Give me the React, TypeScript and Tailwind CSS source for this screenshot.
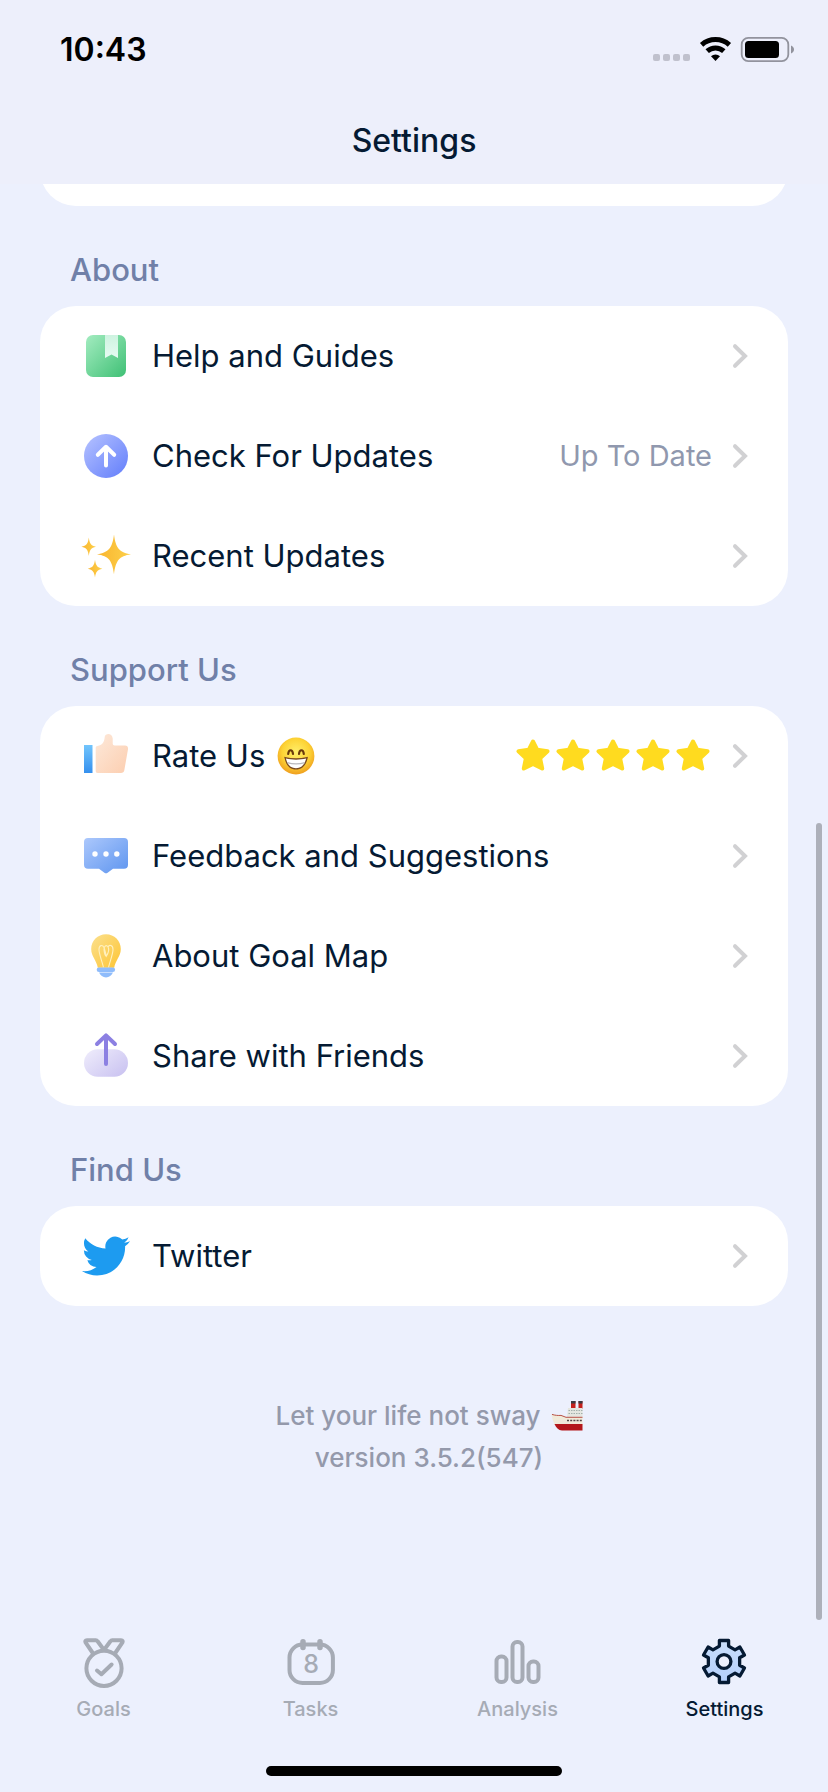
import type { ReactNode } from "react";

function BookIcon() {
  return (
    <svg viewBox="0 0 48 48" className="size-12" aria-hidden="true">
      <defs>
        <linearGradient id="book" x1="0" y1="0" x2="1" y2="1">
          <stop offset="0" stopColor="#a3ecc0" />
          <stop offset="1" stopColor="#3fc075" />
        </linearGradient>
        <linearGradient id="ribbon" x1="0" y1="0" x2="0" y2="1">
          <stop offset="0" stopColor="#cdf3e0" />
          <stop offset="1" stopColor="#e6fbf2" />
        </linearGradient>
      </defs>
      <rect x="4" y="3" width="40" height="42" rx="7" fill="url(#book)" />
      <path d="M23 3H36V26L29.5 22.5L23 26Z" fill="url(#ribbon)" />
    </svg>
  );
}

function UpdateIcon() {
  return (
    <svg viewBox="0 0 48 48" className="size-12" aria-hidden="true">
      <defs>
        <linearGradient id="update" x1="0.1" y1="0.1" x2="0.9" y2="0.9">
          <stop offset="0" stopColor="#aebcff" />
          <stop offset="1" stopColor="#6a84fb" />
        </linearGradient>
      </defs>
      <circle cx="24" cy="24" r="22" fill="url(#update)" />
      <path d="M24 33.5V15M15.8 22.8L24 14.8L32.2 22.8" fill="none" stroke="#fff" strokeWidth="4" strokeLinecap="round" strokeLinejoin="round" />
    </svg>
  );
}

function SparklesIcon() {
  return (
    <svg viewBox="0 0 48 48" className="size-12 overflow-visible" aria-hidden="true">
      <defs>
        <linearGradient id="spark" x1="0" y1="0" x2="1" y2="0">
          <stop offset="0" stopColor="#f9b52f" />
          <stop offset="1" stopColor="#fdd04a" />
        </linearGradient>
      </defs>
      <g fill="url(#spark)">
        <path d="M32 2.5C33.8 16 37 20.4 49 22.3C37 24.2 33.8 28.6 32 42.3C30.2 28.6 27 24.2 15 22.3C27 20.4 30.2 16 32 2.5Z" />
        <path d="M6.8 5.5C7.5 11.5 9 13.6 14 14.7C9 15.8 7.5 18 6.8 24C6.1 18 4.6 15.8 -0.6 14.7C4.6 13.6 6.1 11.5 6.8 5.5Z" />
        <path d="M13 27.8C13.8 33.6 15.2 35.6 20.4 36.7C15.2 37.8 13.8 39.8 13 45.4C12.2 39.8 10.8 37.8 5.8 36.7C10.8 35.6 12.2 33.6 13 27.8Z" />
      </g>
    </svg>
  );
}

function ThumbIcon() {
  return (
    <svg viewBox="0 0 48 48" className="size-12" aria-hidden="true">
      <defs>
        <linearGradient id="cuff" x1="0" y1="0" x2="0" y2="1">
          <stop offset="0" stopColor="#72c5fc" />
          <stop offset="1" stopColor="#3590ee" />
        </linearGradient>
        <linearGradient id="hand" x1="0" y1="0" x2="1" y2="1">
          <stop offset="0" stopColor="#fde9da" />
          <stop offset="1" stopColor="#fcceb0" />
        </linearGradient>
      </defs>
      <rect x="2" y="13" width="8.5" height="28" fill="url(#cuff)" />
      <path d="M15.500 41Q13.700 41 13.700 39.200V15.600Q13.700 14 15.500 13.900C20 13.600 22.300 10.500 22.800 4.600C23.300 1 30.200 0.600 30.700 6.500V11.600C30.700 12.900 31.500 13.600 32.700 13.600H43C45.200 13.600 46.400 15.300 46 17.300L42.300 38.200C42 40 40.800 41 39 41Z" fill="url(#hand)" />
    </svg>
  );
}

function FeedbackIcon() {
  return (
    <svg viewBox="0 0 48 48" className="size-12" aria-hidden="true">
      <defs>
        <linearGradient id="bubble" x1="0" y1="0" x2="1" y2="1">
          <stop offset="0" stopColor="#acc8fc" />
          <stop offset="1" stopColor="#5e95ef" />
        </linearGradient>
      </defs>
      <path d="M6 6H42A4 4 0 0 1 46 10V32.7A4 4 0 0 1 42 36.7H31L25.6 40.7Q24 41.8 22.4 40.7L17 36.7H6A4 4 0 0 1 2 32.7V10A4 4 0 0 1 6 6Z" fill="url(#bubble)" />
      <g fill="#fff">
        <circle cx="13" cy="22" r="2.7" />
        <circle cx="24" cy="22" r="2.7" />
        <circle cx="34.8" cy="22" r="2.7" />
      </g>
    </svg>
  );
}

function BulbIcon() {
  return (
    <svg viewBox="0 0 48 48" className="size-12" aria-hidden="true">
      <defs>
        <linearGradient id="bulb" x1="0" y1="0" x2="1" y2="1">
          <stop offset="0" stopColor="#fbe08e" />
          <stop offset="1" stopColor="#fdc534" />
        </linearGradient>
      </defs>
      <path d="M24 2.3C15.6 2.3 9.2 8.8 9.2 17C9.2 24.5 14.6 28 15.8 35.8H32.2C33.4 28 38.8 24.5 38.8 17C38.8 8.8 32.4 2.3 24 2.3Z" fill="url(#bulb)" />
      <path d="M21.5 35.5C20 29 17 22 17 17.5C17 13 20.5 12.4 22 15.5C23 18 24 23 24.3 24.2C25.8 22 27.5 17.8 26 14.8C24.6 12.3 21.5 14 22 18C22.3 20.5 23 24.2 24.2 24.2M26.5 35.5C28 29 31 22 31 17.5C31 13 27.2 12.4 26 15" fill="none" stroke="#fff0bd" strokeWidth="1.1" />
      <rect x="14.7" y="35.4" width="18.4" height="4.6" rx="2.3" fill="#8fbcfb" />
      <path d="M17 40.6H31C29.6 43.6 27.2 45.4 24 45.4S18.4 43.6 17 40.6Z" fill="#8fbcfb" />
    </svg>
  );
}

function ShareIcon() {
  return (
    <svg viewBox="0 0 48 48" className="size-12" aria-hidden="true">
      <defs>
        <linearGradient id="share" x1="0" y1="0" x2="1" y2="0.8">
          <stop offset="0.1" stopColor="#ece9fb" />
          <stop offset="1" stopColor="#cbc4f1" />
        </linearGradient>
      </defs>
      <rect x="2" y="17.3" width="44" height="27.5" rx="13.7" fill="url(#share)" />
      <path d="M24 32V4M15 12L24 3.4L33 12" fill="none" stroke="#8c80e2" strokeWidth="4" strokeLinecap="round" strokeLinejoin="round" />
    </svg>
  );
}

function TwitterIcon() {
  return (
    <svg viewBox="0 0 24 24" className="size-12" fill="#1d9bf0" aria-hidden="true">
      <path d="M23.953 4.57a10 10 0 01-2.825.775 4.958 4.958 0 002.163-2.723c-.951.555-2.005.959-3.127 1.184a4.92 4.92 0 00-8.384 4.482C7.69 8.095 4.067 6.13 1.64 3.162a4.822 4.822 0 00-.666 2.475c0 1.71.87 3.213 2.188 4.096a4.904 4.904 0 01-2.228-.616v.06a4.923 4.923 0 003.946 4.827 4.996 4.996 0 01-2.212.085 4.936 4.936 0 004.604 3.417 9.867 9.867 0 01-6.102 2.105c-.39 0-.779-.023-1.17-.067a13.995 13.995 0 007.557 2.209c9.053 0 13.998-7.496 13.998-13.985 0-.21 0-.42-.015-.63A9.935 9.935 0 0024 4.59z" />
    </svg>
  );
}

function GrinEmoji() {
  return (
    <svg viewBox="0 0 38 38" className="size-[38px]" role="img" aria-label="Grinning face">
      <defs>
        <radialGradient id="face" cx="0.5" cy="0.4" r="0.62">
          <stop offset="0" stopColor="#ffef6b" />
          <stop offset="0.6" stopColor="#fdd335" />
          <stop offset="1" stopColor="#ee9a1c" />
        </radialGradient>
      </defs>
      <circle cx="19" cy="19" r="18.4" fill="url(#face)" />
      <path d="M11.2 17C11.6 12 15.6 12 16 17M22 17C22.4 12 26.4 12 26.8 17" fill="none" stroke="#6a3a0c" strokeWidth="2.2" strokeLinecap="round" />
      <path d="M7.4 20.6Q6.8 19.6 8 19.9C15 21.6 23 21.6 30 19.9Q31.2 19.6 30.8 20.8C29 28.5 25 32.6 19 32.6S8.900 28.500 7.400 20.600Z" fill="#7a4a20" />
      <path d="M8.900 21.600C15 23 23 23 29.200 21.600C27.500 28 24 31.200 19 31.200S10.400 28 8.900 21.600Z" fill="#fff" />
      <path d="M10.200 25.600C16 27.200 22 27.200 27.900 25.600" fill="none" stroke="#b9b9bd" strokeWidth="1.200" />
    </svg>
  );
}

function ShipEmoji() {
  return (
    <svg viewBox="0 0 32 32" className="size-8" role="img" aria-label="Ship">
      <path d="M20 1H24.500V9H20ZM27.500 1H31.500V9H27.500Z" fill="#c4201c" />
      <path d="M20 1H24.500V3.500H20ZM27.500 1H31.500V3.500H27.500Z" fill="#3b3b42" />
      <path d="M17 8H31.500V17H16Z" fill="#e4e6e0" />
      <path d="M17.500 10.500H31.500M17.500 13.500H31.500" stroke="#a3b0ac" strokeWidth="1" strokeDasharray="1.500 1" />
      <path d="M0.500 14C3 15 7 15.300 10 15L15 17H31.500V25H4C2 21.500 1 18 0.500 14Z" fill="#f0ead9" />
      <path d="M1 14.400C4 15.400 7 15.600 10 15.400L15 17.300H31.500" fill="none" stroke="#b8534a" strokeWidth="1" />
      <path d="M16 20.500H31.500" stroke="#55484a" strokeWidth="1.400" strokeDasharray="2 1.200" />
      <path d="M3.500 24H31.500V30.500H11C7.500 30.500 5 27.500 3.500 24Z" fill="#b3171b" />
    </svg>
  );
}

function Stars() {
  return (
    <span className="flex gap-1.5 pr-0.5" role="img" aria-label="5 stars">
      {[1, 2, 3, 4, 5].map((n) => (
        <svg key={n} viewBox="0 1 34 34" className="size-[34px]" aria-hidden="true">
          <path d="M17 3.500L21.300 11.800L31.500 13.300L24.100 20.200L26.200 30.500L17 25.900L7.800 30.500L9.900 20.200L2.500 13.300L12.700 11.800Z" fill="#ffdb1f" stroke="#ffdb1f" strokeWidth="4" strokeLinejoin="round" />
        </svg>
      ))}
    </span>
  );
}

function Chevron() {
  return (
    <svg viewBox="0 0 16 26" className="h-[26px] w-4" aria-hidden="true">
      <path d="M3 3.200L13 13L3 22.800" fill="none" stroke="#d1d1d3" strokeWidth="4" strokeLinecap="round" strokeLinejoin="miter" />
    </svg>
  );
}

function Row({ icon, label, emoji, value }: { icon: ReactNode; label: string; emoji?: ReactNode; value?: ReactNode }) {
  return (
    <li>
      <button type="button" className="flex h-[100px] w-full items-center pr-10 pl-[42px] text-left">
        {icon}
        <span className="ml-[22px] flex flex-1 items-center gap-3 text-[31px] text-[#051a33]">
          {label}
          {emoji}
        </span>
        {value && <span className="mr-5 text-[29px] text-[#9098ae]">{value}</span>}
        <Chevron />
      </button>
    </li>
  );
}

function Section({ title, children }: { title: string; children: ReactNode }) {
  return (
    <section className="px-10">
      <h2 className="px-[30px] pt-11 pb-4 text-[31px] leading-10 font-medium text-[#7080a8]">{title}</h2>
      <ul className="rounded-[36px] bg-white">{children}</ul>
    </section>
  );
}

function GoalsIcon() {
  return (
    <svg viewBox="0 0 50 50" className="size-[50px] overflow-visible" fill="none" stroke="currentColor" strokeWidth="4" strokeLinecap="round" strokeLinejoin="round" aria-hidden="true">
      <circle cx="25" cy="31.300" r="17.600" />
      <path d="M25 13L18.600 4.300Q17.900 3.300 16.700 3.300H8Q5.400 3.300 6.700 5.700L13.400 15.500" />
      <path d="M25 13L31.400 4.300Q32.100 3.300 33.300 3.300H42Q44.600 3.300 43.300 5.700L36.600 15.500" />
      <path d="M18 33.500L22.400 37.200L32.600 27.500" />
    </svg>
  );
}

function TasksIcon() {
  return (
    <svg viewBox="0 0 50 50" className="size-[50px]" fill="none" stroke="currentColor" strokeWidth="4" strokeLinecap="round" aria-hidden="true">
      <rect x="3.500" y="7.500" width="43.400" height="38.500" rx="13" />
      <path d="M17 4.800V10.500M34 4.800V10.500" strokeWidth="5.500" />
      <text x="25.200" y="36" textAnchor="middle" fill="currentColor" stroke="none" className="text-[25px] font-medium">8</text>
    </svg>
  );
}

function AnalysisIcon() {
  return (
    <svg viewBox="0 0 50 50" className="size-[50px]" fill="none" stroke="currentColor" strokeWidth="4" aria-hidden="true">
      <rect x="3.500" y="19.500" width="10" height="25.500" rx="4.500" />
      <rect x="19.500" y="5" width="10" height="40" rx="4.500" />
      <rect x="35.500" y="24.500" width="10" height="20.500" rx="4.500" />
    </svg>
  );
}

const GEAR_POINTS = [0, 60, 120, 180, 240, 300]
  .flatMap((deg) => {
    const a = (deg * Math.PI) / 180;
    return [[-4.6, -15.4], [-4.6, -21], [4.6, -21], [4.6, -15.4]].map(
      ([x, y]) => `${(24 + x * Math.cos(a) - y * Math.sin(a)).toFixed(2)},${(24.5 + x * Math.sin(a) + y * Math.cos(a)).toFixed(2)}`
    );
  })
  .join(" ");

function SettingsIcon() {
  return (
    <svg viewBox="0 0 50 50" className="size-[50px]" stroke="currentColor" strokeWidth="3.300" strokeLinejoin="round" aria-hidden="true">
      <defs>
        <linearGradient id="gear" x1="0" y1="0" x2="0" y2="1">
          <stop offset="0" stopColor="#c9dffc" />
          <stop offset="1" stopColor="#b4cffb" />
        </linearGradient>
      </defs>
      <polygon points={GEAR_POINTS} fill="url(#gear)" />
      <circle cx="24" cy="24.500" r="6.900" fill="#ecf0fd" />
    </svg>
  );
}

function Tab({ icon, label, active = false }: { icon: ReactNode; label: string; active?: boolean }) {
  return (
    <a
      href={`#${label.toLowerCase()}`}
      aria-current={active ? "page" : undefined}
      className={`flex flex-1 flex-col items-center gap-2.5 ${active ? "text-[#051a33]" : "text-[#a6abb5]"}`}
    >
      {icon}
      <span className="text-[20px] leading-6 font-medium">{label}</span>
    </a>
  );
}

export default function App() {
  return (
    <div className="relative flex min-h-screen flex-col bg-[#ecf0fd] font-['Inter','Liberation_Sans',sans-serif]">
      <header className="bg-[#edeffb]">
        <div className="flex h-[100px] items-center justify-between pr-[34px] pl-[60px]">
          <span className="text-[32px] font-semibold text-black">10:43</span>
          <svg viewBox="0 0 142 28" className="h-7 w-[142px]" role="img" aria-label="Wi-Fi connected, battery charged">
            <g fill="#c0c1cd">
              <rect x="1" y="18" width="7" height="7" rx="2" />
              <rect x="11" y="18" width="7" height="7" rx="2" />
              <rect x="21" y="18" width="7" height="7" rx="2" />
              <rect x="31" y="18" width="7" height="7" rx="2" />
            </g>
            <g fill="none" stroke="#000" strokeWidth="5">
              <path d="M49.600 8.800A21 21 0 0 1 77.400 8.800" />
              <path d="M55.200 15.100A12.300 12.300 0 0 1 71.800 15.100" />
            </g>
            <path d="M63.500 25L59 20.300A6.300 6.300 0 0 1 68 20.300Z" />
            <rect x="89.700" y="1.900" width="46.600" height="23.200" rx="6.500" fill="none" stroke="#92939d" strokeWidth="1.800" />
            <rect x="93" y="5" width="34" height="17" rx="3.500" />
            <path d="M139 9.500C143 11 143 16 139 17.500Z" fill="#92939d" />
          </svg>
        </div>
        <h1 className="h-[84px] pt-[21px] text-center text-[32px] leading-10 font-medium text-[#051a33]">Settings</h1>
      </header>

      <main className="flex-1">
        <div className="flex h-[22px] items-end overflow-hidden px-10">
          <div className="h-[100px] w-full rounded-[36px] bg-white" />
        </div>
        <Section title="About">
          <Row icon={<BookIcon />} label="Help and Guides" />
          <Row icon={<UpdateIcon />} label="Check For Updates" value="Up To Date" />
          <Row icon={<SparklesIcon />} label="Recent Updates" />
        </Section>
        <Section title="Support Us">
          <Row icon={<ThumbIcon />} label="Rate Us" emoji={<GrinEmoji />} value={<Stars />} />
          <Row icon={<FeedbackIcon />} label="Feedback and Suggestions" />
          <Row icon={<BulbIcon />} label="About Goal Map" />
          <Row icon={<ShareIcon />} label="Share with Friends" />
        </Section>
        <Section title="Find Us">
          <Row icon={<TwitterIcon />} label="Twitter" />
        </Section>
        <div className="flex flex-col items-center pt-[89px] pl-[30px] text-[26px] leading-[42px] font-medium text-[#9499ab]">
          <p className="flex items-center gap-2.5">
            Let your life not sway
            <ShipEmoji />
          </p>
          <p>version 3.5.2(547)</p>
        </div>
      </main>

      <nav className="flex pt-6 pb-[45px]" aria-label="Main">
        <Tab icon={<GoalsIcon />} label="Goals" />
        <Tab icon={<TasksIcon />} label="Tasks" />
        <Tab icon={<AnalysisIcon />} label="Analysis" />
        <Tab icon={<SettingsIcon />} label="Settings" active />
      </nav>
      <div className="mb-4 h-2.5 w-[296px] self-center rounded-full bg-black" />

      <div className="absolute top-[823px] right-1.5 h-[797px] w-1.5 rounded-full bg-[#adb0ba]" />
    </div>
  );
}
